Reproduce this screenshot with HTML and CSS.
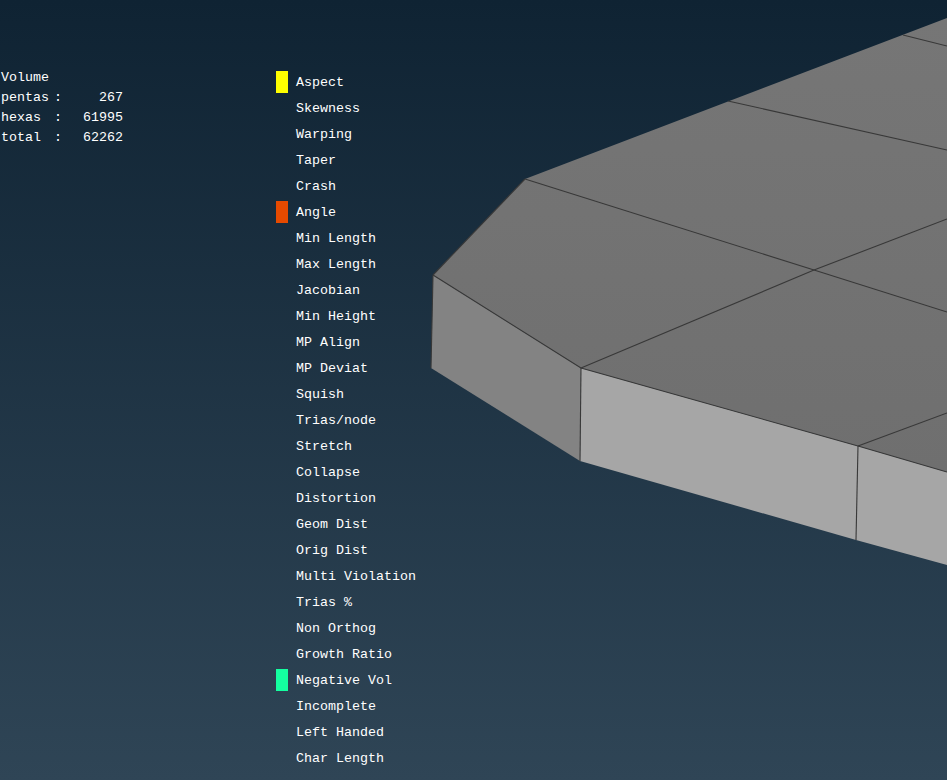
FILE: index.html
```html
<!DOCTYPE html>
<html lang="en">

<head>
    <meta charset="UTF-8">
    <meta name="viewport" content="width=device-width, initial-scale=1.0">
    <title>Mesh Quality</title>
    <link rel="stylesheet" href="styles.css">
</head>

<body>
    <svg class="model" width="947" height="780" viewBox="0 0 947 780">
        <defs>
            <linearGradient id="topFace" x1="0" y1="0" x2="0" y2="1">
                <stop offset="0" stop-color="#767676" />
                <stop offset="1" stop-color="#6f6f6f" />
            </linearGradient>
        </defs>
        <polygon points="433,275 525,179 947,18 947,472 858,446 581,368" fill="url(#topFace)" />
        <polygon points="433,275 581,368 580,461 431,368" fill="#838383" />
        <polygon points="581,368 858,446 947,472 947,565 856,540 580,461" fill="#a6a6a6" />
        <g class="edges">
            <path d="M525,179 L814,270 L947,312" />
            <path d="M581,368 L814,270 L947,219" />
            <path d="M858,446 L947,413" />
            <path d="M728,101 L947,150" />
            <path d="M903,35 L947,46" />
            <path d="M433,275 L581,368 L858,446 L947,472" />
            <path d="M433,275 L525,179" />
            <path d="M433,275 L431,368" />
            <path d="M581,368 L580,461" />
            <path d="M858,446 L856,540" />
        </g>
    </svg>

    <div class="overlay">
        <div class="stats">
            <div class="stats-title">Volume</div>
            <div class="stats-row"><span>pentas</span><span>:</span><span class="stats-value">267</span></div>
            <div class="stats-row"><span>hexas</span><span>:</span><span class="stats-value">61995</span></div>
            <div class="stats-row"><span>total</span><span>:</span><span class="stats-value">62262</span></div>
        </div>

        <ul class="checks">
            <li><span class="swatch swatch-yellow"></span>Aspect</li>
            <li><span class="swatch"></span>Skewness</li>
            <li><span class="swatch"></span>Warping</li>
            <li><span class="swatch"></span>Taper</li>
            <li><span class="swatch"></span>Crash</li>
            <li><span class="swatch swatch-orange"></span>Angle</li>
            <li><span class="swatch"></span>Min Length</li>
            <li><span class="swatch"></span>Max Length</li>
            <li><span class="swatch"></span>Jacobian</li>
            <li><span class="swatch"></span>Min Height</li>
            <li><span class="swatch"></span>MP Align</li>
            <li><span class="swatch"></span>MP Deviat</li>
            <li><span class="swatch"></span>Squish</li>
            <li><span class="swatch"></span>Trias/node</li>
            <li><span class="swatch"></span>Stretch</li>
            <li><span class="swatch"></span>Collapse</li>
            <li><span class="swatch"></span>Distortion</li>
            <li><span class="swatch"></span>Geom Dist</li>
            <li><span class="swatch"></span>Orig Dist</li>
            <li><span class="swatch"></span>Multi Violation</li>
            <li><span class="swatch"></span>Trias %</li>
            <li><span class="swatch"></span>Non Orthog</li>
            <li><span class="swatch"></span>Growth Ratio</li>
            <li><span class="swatch swatch-green"></span>Negative Vol</li>
            <li><span class="swatch"></span>Incomplete</li>
            <li><span class="swatch"></span>Left Handed</li>
            <li><span class="swatch"></span>Char Length</li>
        </ul>
    </div>
</body>

</html>
```

FILE: styles.css
```css
html,
body {
    height: 100%;
}

body {
    margin: 0;
    overflow: hidden;
    background: linear-gradient(#0f2333, #2f4556);
    color: #fff;
    font-family: "Liberation Mono", monospace;
    font-size: 13.33px;
}

.model {
    position: absolute;
    top: 0;
    left: 0;
}

.edges path {
    fill: none;
    stroke: #383838;
    stroke-width: 1.1;
}

.overlay {
    position: relative;
    display: flex;
    padding-top: 68px;
}

.stats {
    width: 276px;
    padding-left: 1px;
    box-sizing: border-box;
    line-height: 20px;
}

.stats-row {
    display: grid;
    grid-template-columns: 53px 8px 61px;
    width: 122px;
}

.stats-value {
    text-align: right;
}

.checks {
    margin: 1px 0 0;
    padding: 0;
    list-style: none;
}

.checks li {
    display: flex;
    align-items: center;
    gap: 8px;
    height: 26px;
}

.swatch {
    width: 12px;
    height: 22px;
}

.swatch-yellow {
    background-color: #ffff00;
}

.swatch-orange {
    background-color: #e64a00;
}

.swatch-green {
    background-color: #14ffa0;
}
```
